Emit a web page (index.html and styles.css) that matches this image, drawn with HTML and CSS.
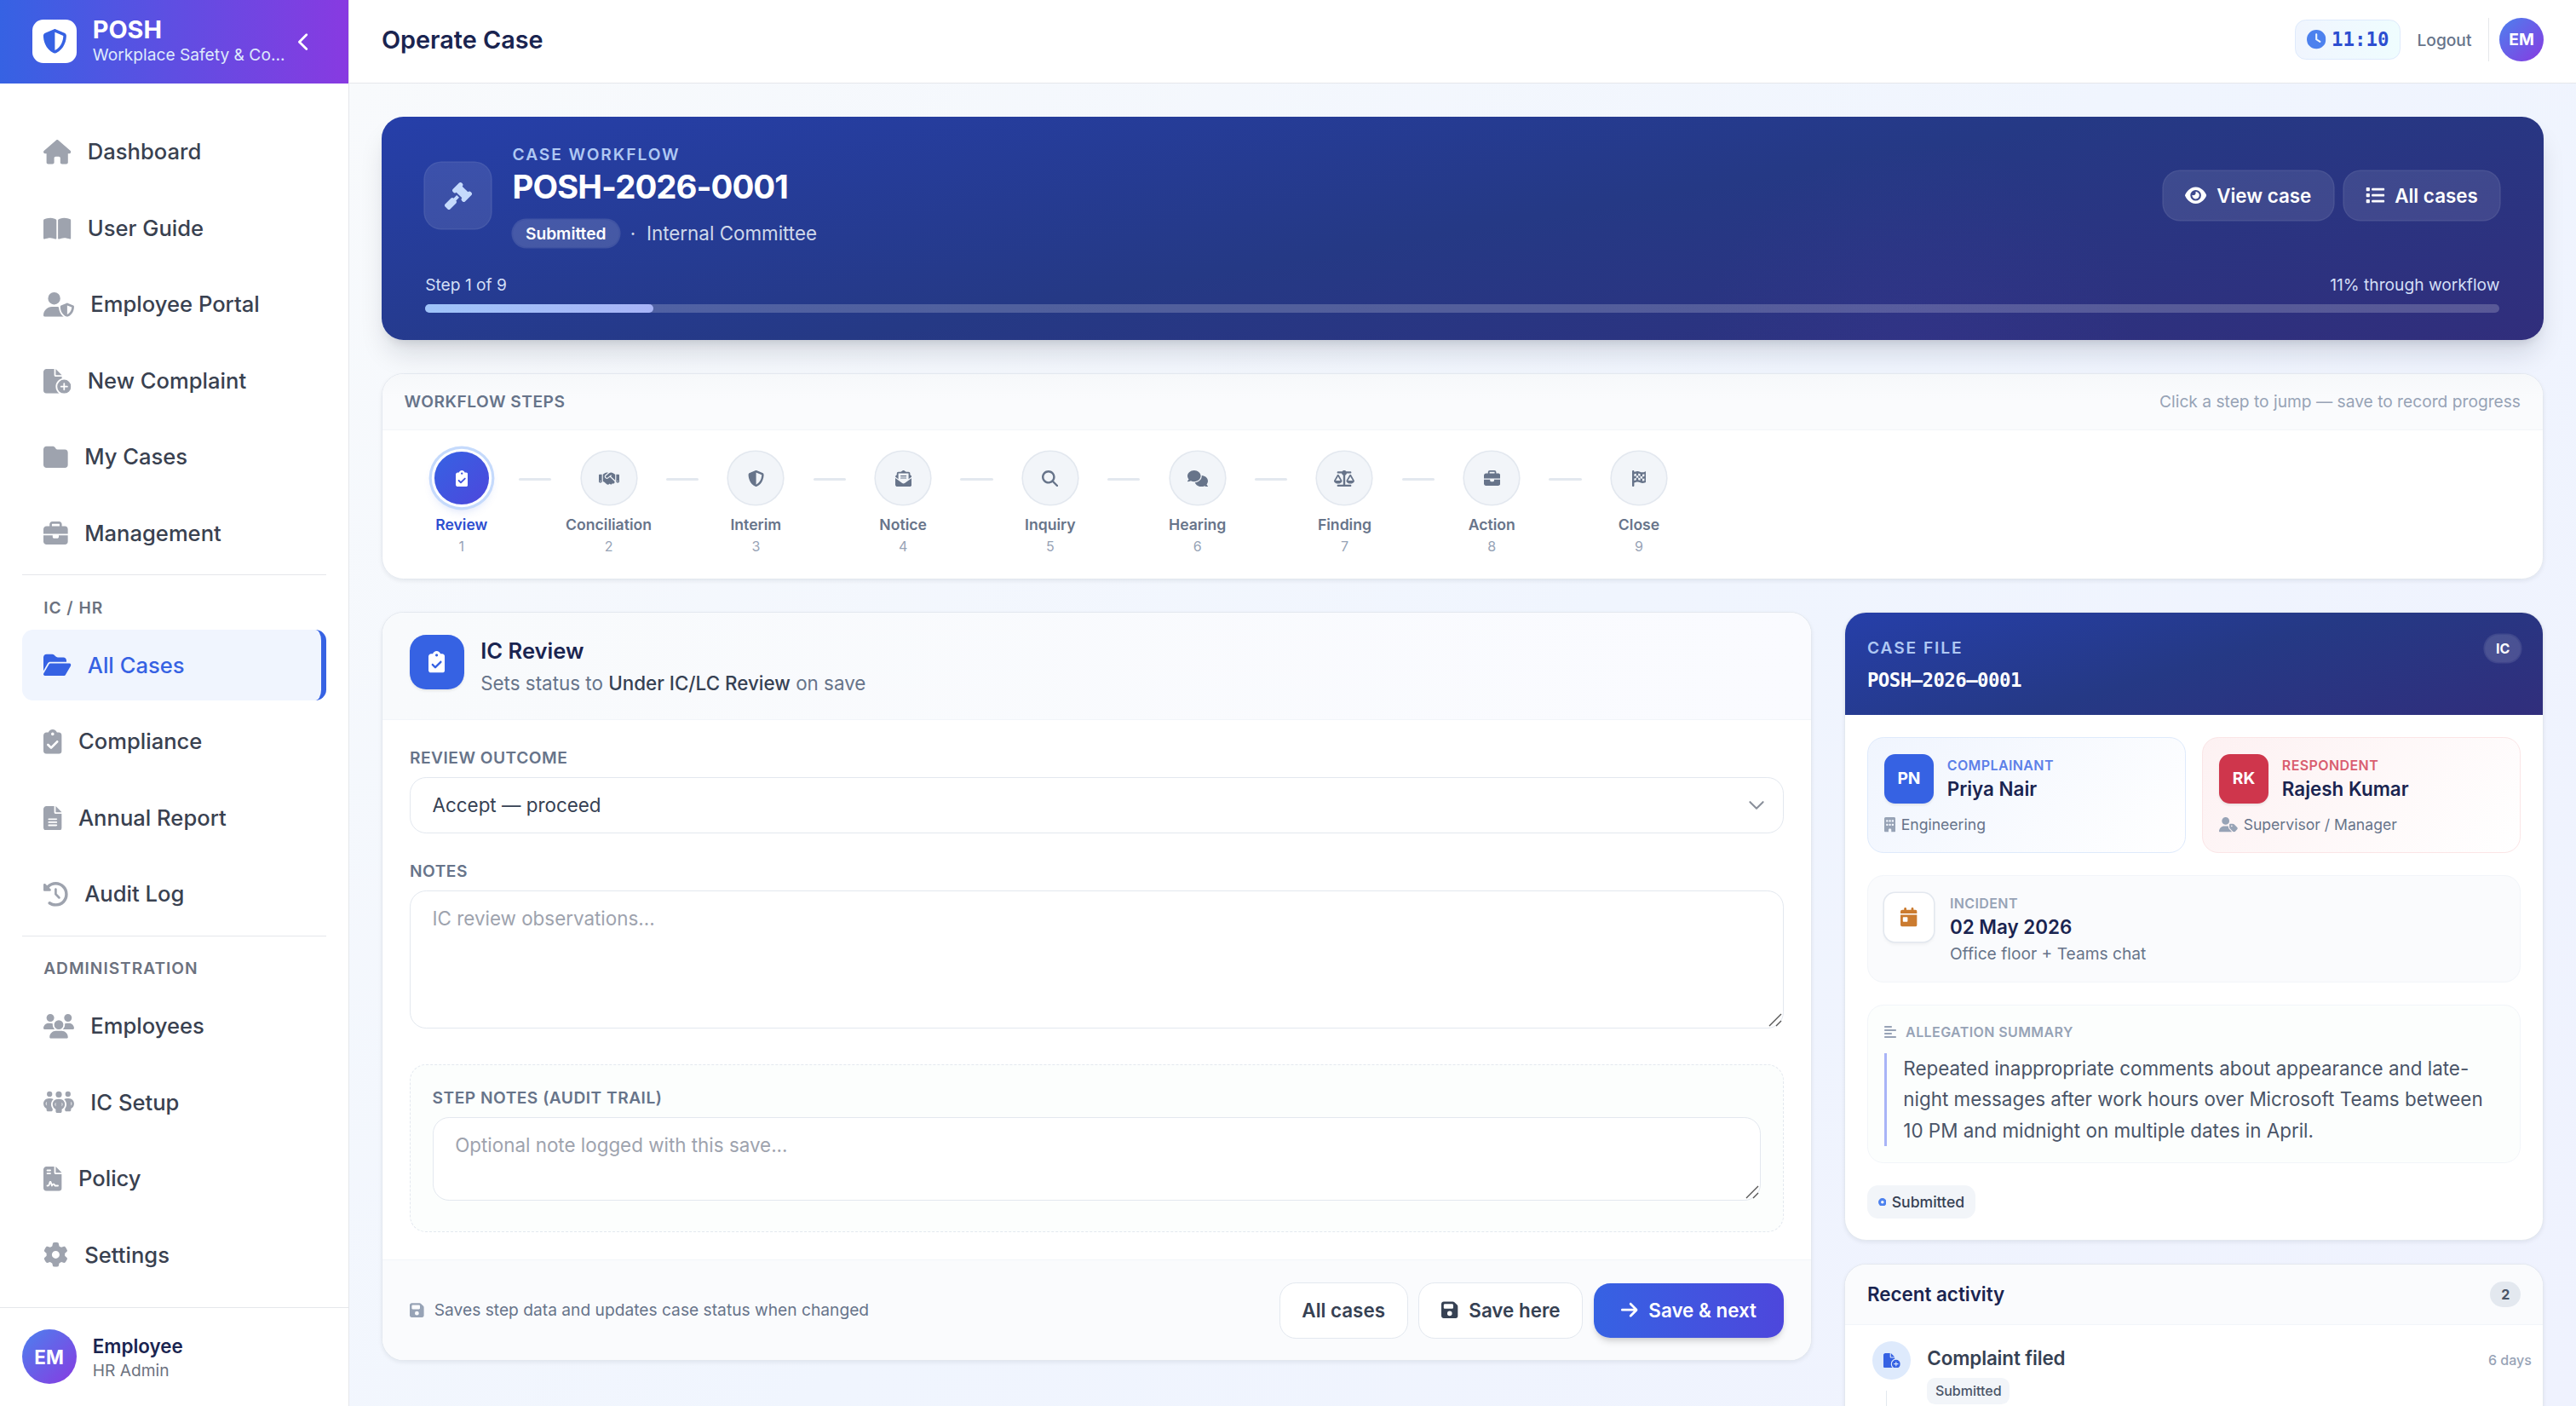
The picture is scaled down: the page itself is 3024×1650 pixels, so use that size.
FILE: index.html
```html
<!DOCTYPE html>
<html lang="en">
<head>
    <meta charset="UTF-8">
    <meta name="viewport" content="width=device-width, initial-scale=1.0">
    <title>Operate Case</title>
    <link rel="stylesheet" href="styles.css">
</head>
<body>
    <!-- icon set -->
    <svg class="sprite" aria-hidden="true">
        <symbol id="house" viewBox="0 0 576 512"><path d="M575.8 255.5c0 18-15 32.1-32 32.1h-32l.7 160.2c0 2.7-.2 5.4-.5 8.1V472c0 22.1-17.9 40-40 40H456c-1.1 0-2.2 0-3.3-.1c-1.4 .1-2.8 .1-4.2 .1H416 392c-22.1 0-40-17.9-40-40V448 384c0-17.7-14.3-32-32-32H256c-17.7 0-32 14.3-32 32v64 24c0 22.1-17.9 40-40 40H160 128.1c-1.5 0-3-.1-4.5-.2c-1.2 .1-2.4 .2-3.6 .2H104c-22.1 0-40-17.9-40-40V360c0-.9 0-1.9 .1-2.8V287.6H32c-18 0-32-14-32-32.1c0-9 3-17 10-24L266.4 8c7-7 15-8 22-8s15 2 21 7L564.8 231.5c8 7 12 15 11 24z"/></symbol>
        <symbol id="book" viewBox="0 0 576 512"><path d="M249.6 471.5c10.8 3.8 22.4-4.1 22.4-15.5V78.6c0-4.2-1.6-8.4-5-11C247.4 52 202.4 32 144 32C93.5 32 46.3 45.3 18.1 56.1C6.8 60.5 0 71.7 0 83.8V454.1c0 11.9 12.8 20.2 24.1 16.5C55.6 460.1 105.5 448 144 448c33.9 0 79 14 105.6 23.5zm76.8 0C353 462 398.1 448 432 448c38.5 0 88.4 12.1 119.9 22.6c11.3 3.8 24.1-4.6 24.1-16.5V83.8c0-12.1-6.8-23.3-18.1-27.6C529.7 45.3 482.5 32 432 32c-58.4 0-103.4 20-123 35.6c-3.3 2.6-5 6.8-5 11V456c0 11.4 11.7 19.3 22.4 15.5z"/></symbol>
        <symbol id="user-shield" viewBox="0 0 640 512"><path d="M224 256A128 128 0 1 0 224 0a128 128 0 1 0 0 256zm-45.7 48C79.8 304 0 383.8 0 482.3C0 498.7 13.3 512 29.7 512H418.3c1.8 0 3.5-.2 5.3-.5c-76.3-55.1-99.8-141-103.1-200.2c-16.1-4.8-33.1-7.3-50.7-7.3H178.3zm308.8-78.3l-120 48C358 277.4 352 286.2 352 296c0 63.3 25.9 168.8 134.8 214.2c5.9 2.5 12.6 2.5 18.5 0C614.1 464.8 640 359.3 640 296c0-9.8-6-18.6-15.1-22.3l-120-48c-5.7-2.3-12.1-2.3-17.8 0zM591.4 312c-3.9 50.7-27.2 116.7-95.4 149.7V273.8L591.4 312z"/></symbol>
        <symbol id="file-plus" viewBox="0 0 576 512"><path d="M0 64C0 28.7 28.7 0 64 0H224V128c0 17.7 14.3 32 32 32H384v38.6C310.1 219.5 256 287.4 256 368c0 59.1 29.1 111.3 73.7 143.3c-3.2 .5-6.4 .7-9.7 .7H64c-35.3 0-64-28.7-64-64V64zm384 64H256V0L384 128zm48 96a144 144 0 1 1 0 288 144 144 0 1 1 0-288zm16 80c0-8.8-7.2-16-16-16s-16 7.2-16 16v48H368c-8.8 0-16 7.2-16 16s7.2 16 16 16h48v48c0 8.8 7.2 16 16 16s16-7.2 16-16V384h48c8.8 0 16-7.2 16-16s-7.2-16-16-16H448V304z"/></symbol>
        <symbol id="folder" viewBox="0 0 512 512"><path d="M64 480H448c35.3 0 64-28.7 64-64V160c0-35.3-28.7-64-64-64H288c-10.1 0-19.6-4.7-25.6-12.8L243.2 57.6C231.1 41.5 212.1 32 192 32H64C28.7 32 0 60.7 0 96V416c0 35.3 28.7 64 64 64z"/></symbol>
        <symbol id="briefcase" viewBox="0 0 512 512"><path d="M184 48H328c4.4 0 8 3.6 8 8V96H176V56c0-4.4 3.6-8 8-8zm-56 8V96H64C28.7 96 0 124.7 0 160v96H192 320 512V160c0-35.3-28.7-64-64-64H384V56c0-30.9-25.1-56-56-56H184c-30.9 0-56 25.1-56 56zM512 288H320v32c0 17.7-14.3 32-32 32H224c-17.7 0-32-14.3-32-32V288H0V416c0 35.3 28.7 64 64 64H448c35.3 0 64-28.7 64-64V288z"/></symbol>
        <symbol id="folder-open" viewBox="0 0 576 512"><path d="M88.7 223.8L0 375.8V96C0 60.7 28.7 32 64 32H181.5c17 0 33.3 6.7 45.3 18.7l26.5 26.5c12 12 28.3 18.7 45.3 18.7H416c35.3 0 64 28.7 64 64v32H144c-22.8 0-43.8 12.1-55.3 31.8zm27.6 16.1C122.1 230 132.6 224 144 224H544c11.5 0 22 6.1 27.7 16.1s5.7 22.2-.1 32.1l-112 192C453.9 474 443.4 480 432 480H32c-11.5 0-22-6.1-27.7-16.1s-5.7-22.2 .1-32.1l112-192z"/></symbol>
        <symbol id="clipboard-check" viewBox="0 0 384 512"><path d="M192 0c-41.8 0-77.4 26.7-90.5 64H64C28.7 64 0 92.7 0 128V448c0 35.3 28.7 64 64 64H320c35.3 0 64-28.7 64-64V128c0-35.3-28.7-64-64-64H282.5C269.4 26.7 233.8 0 192 0zm0 64a32 32 0 1 1 0 64 32 32 0 1 1 0-64zM305 273L177 401c-9.4 9.4-24.6 9.4-33.9 0L79 337c-9.4-9.4-9.4-24.6 0-33.9s24.6-9.4 33.9 0l47 47L271 239c9.4-9.4 24.6-9.4 33.9 0s9.4 24.6 0 33.9z"/></symbol>
        <symbol id="file-lines" viewBox="0 0 384 512"><path d="M64 0C28.7 0 0 28.7 0 64V448c0 35.3 28.7 64 64 64H320c35.3 0 64-28.7 64-64V160H256c-17.7 0-32-14.3-32-32V0H64zM256 0V128H384L256 0zM112 256H272c8.8 0 16 7.2 16 16s-7.2 16-16 16H112c-8.8 0-16-7.2-16-16s7.2-16 16-16zm0 64H272c8.8 0 16 7.2 16 16s-7.2 16-16 16H112c-8.8 0-16-7.2-16-16s7.2-16 16-16zm0 64H272c8.8 0 16 7.2 16 16s-7.2 16-16 16H112c-8.8 0-16-7.2-16-16s7.2-16 16-16z"/></symbol>
        <symbol id="history" viewBox="0 0 512 512"><path d="M75 75L41 41C25.9 25.9 0 36.6 0 57.9V168c0 13.3 10.7 24 24 24H134.1c21.4 0 32.1-25.9 17-41l-30.8-30.8C155 85.5 203 64 256 64c106 0 192 86 192 192s-86 192-192 192c-40.8 0-78.6-12.7-109.7-34.4c-14.5-10.1-34.4-6.6-44.6 7.9s-6.6 34.4 7.9 44.6C151.2 495 201.7 512 256 512c141.4 0 256-114.6 256-256S397.4 0 256 0C185.3 0 121.3 28.7 75 75zm181 53c-13.3 0-24 10.7-24 24V256c0 6.4 2.5 12.5 7 17l72 72c9.4 9.4 24.6 9.4 33.9 0s9.4-24.6 0-33.9l-65-65V152c0-13.3-10.7-24-24-24z"/></symbol>
        <symbol id="users" viewBox="0 0 640 512"><path d="M144 0a80 80 0 1 1 0 160A80 80 0 1 1 144 0zM512 0a80 80 0 1 1 0 160A80 80 0 1 1 512 0zM0 298.7C0 239.8 47.8 192 106.7 192h42.7c15.9 0 31 3.5 44.6 9.7c-1.3 7.2-1.9 14.7-1.9 22.3c0 38.2 16.8 72.5 43.3 96c-.2 0-.4 0-.7 0H21.3C9.6 320 0 310.4 0 298.7zM405.3 320c-.2 0-.4 0-.7 0c26.6-23.5 43.3-57.8 43.3-96c0-7.6-.7-15-1.9-22.3c13.6-6.3 28.7-9.7 44.6-9.7h42.7C592.2 192 640 239.8 640 298.7c0 11.8-9.6 21.3-21.3 21.3H405.3zM224 224a96 96 0 1 1 192 0 96 96 0 1 1 -192 0zM128 485.3C128 411.7 187.7 352 261.3 352H378.7C452.3 352 512 411.7 512 485.3c0 14.7-11.9 26.7-26.7 26.7H154.7c-14.7 0-26.7-11.9-26.7-26.7z"/></symbol>
        <symbol id="people-group" viewBox="0 0 640 512"><path d="M72 88a56 56 0 1 1 112 0A56 56 0 1 1 72 88zM64 245.7C54 256.9 48 271.8 48 288s6 31.1 16 42.3V245.7zm144.4-49.3C178.7 222.7 160 261.2 160 304c0 34.3 12 65.8 32 90.5V416c0 17.7-14.3 32-32 32H96c-17.7 0-32-14.3-32-32V389.2C26.2 371.2 0 332.7 0 288c0-61.9 50.1-112 112-112h32c24 0 46.2 7.5 64.4 20.3zM448 416V394.5c20-24.7 32-56.2 32-90.5c0-42.8-18.7-81.3-48.4-107.7C449.8 183.5 472 176 496 176h32c61.9 0 112 50.1 112 112c0 44.7-26.2 83.2-64 101.2V416c0 17.7-14.3 32-32 32H480c-17.7 0-32-14.3-32-32zm8-328a56 56 0 1 1 112 0A56 56 0 1 1 456 88zM576 245.7v84.7c10-11.3 16-26.1 16-42.3s-6-31.1-16-42.3zM320 32a64 64 0 1 1 0 128 64 64 0 1 1 0-128zM240 304c0 16.2 6 31 16 42.3V261.7c-10 11.3-16 26.1-16 42.3zm144-42.3v84.7c10-11.3 16-26.1 16-42.3s-6-31.1-16-42.3zM448 304c0 44.7-26.2 83.2-64 101.2V448c0 17.7-14.3 32-32 32H288c-17.7 0-32-14.3-32-32V405.2c-37.8-18-64-56.5-64-101.2c0-61.9 50.1-112 112-112h32c61.9 0 112 50.1 112 112z"/></symbol>
        <symbol id="file-contract" viewBox="0 0 384 512"><path d="M64 0C28.7 0 0 28.7 0 64V448c0 35.3 28.7 64 64 64H320c35.3 0 64-28.7 64-64V160H256c-17.7 0-32-14.3-32-32V0H64zM256 0V128H384L256 0zM80 64h64c8.8 0 16 7.2 16 16s-7.2 16-16 16H80c-8.8 0-16-7.2-16-16s7.2-16 16-16zm0 64h64c8.8 0 16 7.2 16 16s-7.2 16-16 16H80c-8.8 0-16-7.2-16-16s7.2-16 16-16zm54.2 253.8c-6.1 20.3-24.8 34.2-46 34.2H80c-8.8 0-16-7.2-16-16s7.2-16 16-16h8.2c7.1 0 13.3-4.6 15.3-11.4l14.9-49.5c3.4-11.3 13.8-19.1 25.6-19.1s22.2 7.7 25.6 19.1l11.6 38.6c7.4-6.2 16.8-9.7 26.8-9.7c15.9 0 30.4 9 37.5 23.2l4.4 8.8H304c8.8 0 16 7.2 16 16s-7.2 16-16 16H240c-6.1 0-11.6-3.4-14.3-8.8l-8.8-17.7c-1.7-3.4-5.1-5.5-8.8-5.5s-7.2 2.1-8.8 5.5l-8.8 17.7c-2.9 5.9-9.2 9.4-15.7 8.8s-12.1-5.1-13.9-11.3L144 349l-9.8 32.8z"/></symbol>
        <symbol id="gear" viewBox="0 0 512 512"><path d="M495.9 166.6c3.2 8.7 .5 18.4-6.4 24.6l-43.3 39.4c1.1 8.3 1.7 16.8 1.7 25.4s-.6 17.1-1.7 25.4l43.3 39.4c6.9 6.2 9.6 15.9 6.4 24.6c-4.4 11.9-9.7 23.3-15.8 34.3l-4.7 8.1c-6.6 11-14 21.4-22.1 31.2c-5.9 7.2-15.7 9.6-24.5 6.8l-55.7-17.7c-13.4 10.3-28.2 18.9-44 25.4l-12.5 57.1c-2 9.1-9 16.3-18.2 17.8c-13.8 2.3-28 3.5-42.5 3.5s-28.7-1.2-42.5-3.5c-9.2-1.5-16.2-8.7-18.2-17.8l-12.5-57.1c-15.8-6.5-30.6-15.1-44-25.4L83.1 425.9c-8.8 2.8-18.6 .3-24.5-6.8c-8.1-9.8-15.5-20.2-22.1-31.2l-4.7-8.1c-6.1-11-11.4-22.4-15.8-34.3c-3.2-8.7-.5-18.4 6.4-24.6l43.3-39.4C64.6 273.1 64 264.6 64 256s.6-17.1 1.7-25.4L22.4 191.2c-6.9-6.2-9.6-15.9-6.4-24.6c4.4-11.9 9.7-23.3 15.8-34.3l4.7-8.1c6.6-11 14-21.4 22.1-31.2c5.9-7.2 15.7-9.6 24.5-6.8l55.7 17.7c13.4-10.3 28.2-18.9 44-25.4l12.5-57.1c2-9.1 9-16.3 18.2-17.8C227.3 1.2 241.5 0 256 0s28.7 1.2 42.5 3.5c9.2 1.5 16.2 8.7 18.2 17.8l12.5 57.1c15.8 6.5 30.6 15.1 44 25.4l55.7-17.7c8.8-2.8 18.6-.3 24.5 6.8c8.1 9.8 15.5 20.2 22.1 31.2l4.7 8.1c6.1 11 11.4 22.4 15.8 34.3zM256 336a80 80 0 1 0 0-160 80 80 0 1 0 0 160z"/></symbol>
        <symbol id="shield" viewBox="0 0 512 512"><path d="M256 0c4.6 0 9.2 1 13.4 2.9L457.7 82.8c22 9.3 38.4 31 38.3 57.2c-.5 99.2-41.3 280.7-213.6 363.2c-16.7 8-36.1 8-52.8 0C57.3 420.7 16.5 239.2 16 140c-.1-26.2 16.3-47.9 38.3-57.2L242.7 2.9C246.8 1 251.4 0 256 0zm0 66.8V444.8C394 378 431.1 230.1 432 141.4L256 66.8l0 0z"/></symbol>
        <symbol id="gavel" viewBox="0 0 512 512"><path d="M318.6 9.4c-12.5-12.5-32.8-12.5-45.3 0l-120 120c-12.5 12.5-12.5 32.8 0 45.3l16 16c12.5 12.5 32.8 12.5 45.3 0l4-4L325.4 293.4l-4 4c-12.5 12.5-12.5 32.8 0 45.3l16 16c12.5 12.5 32.8 12.5 45.3 0l120-120c12.5-12.5 12.5-32.8 0-45.3l-16-16c-12.5-12.5-32.8-12.5-45.3 0l-4 4L330.6 74.6l4-4c12.5-12.5 12.5-32.8 0-45.3l-16-16zm-152 288c-12.5-12.5-32.8-12.5-45.3 0l-112 112c-12.5 12.5-12.5 32.8 0 45.3l48 48c12.5 12.5 32.8 12.5 45.3 0l112-112c12.5-12.5 12.5-32.8 0-45.3l-1.4-1.4L272 285.3 226.7 240 168 298.7l-1.4-1.4z"/></symbol>
        <symbol id="eye" viewBox="0 0 576 512"><path d="M288 32c-80.8 0-145.5 36.8-192.6 80.6C48.6 156 17.3 208 2.5 243.7c-3.3 7.9-3.3 16.7 0 24.6C17.3 304 48.6 356 95.4 399.4C142.5 443.2 207.2 480 288 480s145.5-36.8 192.6-80.6c46.8-43.5 78.1-95.4 93-131.1c3.3-7.9 3.3-16.7 0-24.6c-14.9-35.7-46.2-87.7-93-131.1C433.5 68.8 368.8 32 288 32zM144 256a144 144 0 1 1 288 0 144 144 0 1 1 -288 0zm144-64c0 35.3-28.7 64-64 64c-7.1 0-13.9-1.2-20.3-3.3c-5.5-1.8-11.9 1.6-11.7 7.4c.3 6.9 1.3 13.8 3.2 20.7c13.7 51.2 66.4 81.6 117.6 67.9s81.6-66.4 67.9-117.6c-11.1-41.5-47.8-69.4-88.6-71.1c-5.8-.2-9.2 6.1-7.4 11.7c2.1 6.4 3.3 13.2 3.3 20.3z"/></symbol>
        <symbol id="list" viewBox="0 0 512 512"><path d="M40 48C26.7 48 16 58.7 16 72v48c0 13.3 10.7 24 24 24H88c13.3 0 24-10.7 24-24V72c0-13.3-10.7-24-24-24H40zM192 64c-17.7 0-32 14.3-32 32s14.3 32 32 32H480c17.7 0 32-14.3 32-32s-14.3-32-32-32H192zm0 160c-17.7 0-32 14.3-32 32s14.3 32 32 32H480c17.7 0 32-14.3 32-32s-14.3-32-32-32H192zm0 160c-17.7 0-32 14.3-32 32s14.3 32 32 32H480c17.7 0 32-14.3 32-32s-14.3-32-32-32H192zM16 232v48c0 13.3 10.7 24 24 24H88c13.3 0 24-10.7 24-24V232c0-13.3-10.7-24-24-24H40c-13.3 0-24 10.7-24 24zM40 368c-13.3 0-24 10.7-24 24v48c0 13.3 10.7 24 24 24H88c13.3 0 24-10.7 24-24V392c0-13.3-10.7-24-24-24H40z"/></symbol>
        <symbol id="clock" viewBox="0 0 512 512"><path d="M256 0a256 256 0 1 1 0 512A256 256 0 1 1 256 0zM232 120V256c0 8 4 15.5 10.7 20l96 64c11 7.4 25.9 4.4 33.3-6.7s4.4-25.9-6.7-33.3L280 243.2V120c0-13.3-10.7-24-24-24s-24 10.7-24 24z"/></symbol>
        <symbol id="handshake" viewBox="0 0 640 512"><path d="M323.4 85.2l-96.8 78.4c-16.1 13-19.2 36.4-7 53.1c12.9 17.8 38 21.3 55.3 7.8l99.3-77.2c7-5.4 17-4.2 22.5 2.8s4.2 17-2.8 22.5l-20.9 16.2L512 316.8V128h-.7l-3.9-2.5L434.8 79c-15.3-9.8-33.2-15-51.4-15c-21.8 0-43 7.5-60 21.2zm22.8 124.4l-51.7 40.2C263 274.3 217.3 268 193.7 235.6c-22.2-30.5-16.6-73.1 12.7-96.8l83.2-67.3c-11.6-4.9-24.1-7.4-36.8-7.4C234 64 215.7 69.6 200 80l-72 48V352h28.2l91.4 83.4c19.6 17.9 49.9 16.5 67.8-3.1c5.5-6.1 9.2-13.2 11.1-20.6l17 15.6c19.5 17.9 49.9 16.6 67.8-2.9c4.5-4.9 7.8-10.6 9.9-16.5c19.4 13 45.8 10.3 62.1-7.5c17.9-19.5 16.6-49.9-2.9-67.8l-134.2-123zM16 128c-8.8 0-16 7.2-16 16V352c0 17.7 14.3 32 32 32H64c17.7 0 32-14.3 32-32V128H16zM48 320a16 16 0 1 1 0 32 16 16 0 1 1 0-32zM544 128V352c0 17.7 14.3 32 32 32h32c17.7 0 32-14.3 32-32V144c0-8.8-7.2-16-16-16H544zm32 208a16 16 0 1 1 32 0 16 16 0 1 1 -32 0z"/></symbol>
        <symbol id="envelope" viewBox="0 0 512 512"><path d="M215.4 96H144 107.8 96v8.8V144v40.4 89L.2 202.5c1.6-18.1 10.9-34.9 25.7-45.8L48 140.3V96c0-26.5 21.5-48 48-48h76.6l49.9-36.9C232.2 3.9 243.9 0 256 0s23.8 3.9 33.5 11L339.4 48H416c26.5 0 48 21.5 48 48v44.3l22.1 16.4c14.8 10.9 24.1 27.7 25.7 45.8L416 273.4v-89V144 104.8 96H404.2 368 296.6 215.4zM0 448V242.1L217.6 403.3c11.1 8.2 24.6 12.7 38.4 12.7s27.3-4.4 38.4-12.7L512 242.1V448v0c0 35.3-28.7 64-64 64H64c-35.3 0-64-28.7-64-64v0zM176 160H336c8.8 0 16 7.2 16 16s-7.2 16-16 16H176c-8.8 0-16-7.2-16-16s7.2-16 16-16zm0 64H336c8.8 0 16 7.2 16 16s-7.2 16-16 16H176c-8.8 0-16-7.2-16-16s7.2-16 16-16z"/></symbol>
        <symbol id="search" viewBox="0 0 512 512"><path d="M416 208c0 45.9-14.9 88.3-40 122.7L502.6 457.4c12.5 12.5 12.5 32.8 0 45.3s-32.8 12.5-45.3 0L330.7 376c-34.4 25.2-76.8 40-122.7 40C93.1 416 0 322.9 0 208S93.1 0 208 0S416 93.1 416 208zM208 352a144 144 0 1 0 0-288 144 144 0 1 0 0 288z"/></symbol>
        <symbol id="comments" viewBox="0 0 640 512"><path d="M208 352c114.9 0 208-78.8 208-176S322.9 0 208 0S0 78.8 0 176c0 38.6 14.7 74.3 39.6 103.4c-3.5 9.4-8.7 17.7-14.2 24.7c-4.8 6.2-9.7 11-13.3 14.3c-1.8 1.6-3.3 2.9-4.3 3.7c-.5 .4-.9 .7-1.1 .8l-.2 .2C1 327.2-1.4 334.4 .8 340.9S9.1 352 16 352c21.8 0 43.8-5.6 62.1-12.5c9.2-3.5 17.8-7.4 25.3-11.4C134.1 343.3 169.8 352 208 352zM448 176c0 112.3-99.1 196.9-216.5 207C255.8 457.4 336.4 512 432 512c38.2 0 73.9-8.7 104.7-23.9c7.5 4 16 7.9 25.2 11.4c18.3 6.9 40.3 12.5 62.1 12.5c6.9 0 13.1-4.5 15.2-11.1c2.1-6.6-.2-13.8-5.8-17.9l-.2-.2c-.2-.2-.6-.4-1.1-.8c-1-.8-2.5-2-4.3-3.7c-3.6-3.3-8.5-8.1-13.3-14.3c-5.5-7-10.7-15.4-14.2-24.7c24.9-29 39.6-64.7 39.6-103.4c0-92.8-84.9-168.9-192.6-175.5c.4 5.1 .6 10.3 .6 15.5z"/></symbol>
        <symbol id="scale" viewBox="0 0 640 512"><path d="M384 32H512c17.7 0 32 14.3 32 32s-14.3 32-32 32H398.4c-5.2 25.8-22.9 47.1-46.4 57.3V448H512c17.7 0 32 14.3 32 32s-14.3 32-32 32H320 128c-17.7 0-32-14.3-32-32s14.3-32 32-32H288V153.3c-23.5-10.3-41.2-31.6-46.4-57.3H128c-17.7 0-32-14.3-32-32s14.3-32 32-32H256c14.6-19.4 37.8-32 64-32s49.4 12.6 64 32zm55.6 288H584.4L512 195.8 439.6 320zM512 416c-62.9 0-115.2-34-126-78.9c-2.6-11 1-22.3 6.7-32.1l95.2-163.2c5-8.6 14.2-13.8 24.1-13.8s19.1 5.3 24.1 13.8l95.2 163.2c5.7 9.8 9.3 21.1 6.7 32.1C627.2 382 574.9 416 512 416zM126.8 195.8L54.4 320H199.3L126.8 195.8zM.9 337.1c-2.6-11 1-22.3 6.7-32.1l95.2-163.2c5-8.6 14.2-13.8 24.1-13.8s19.1 5.3 24.1 13.8l95.2 163.2c5.7 9.8 9.3 21.1 6.7 32.1C242 382 189.7 416 126.8 416S11.7 382 .9 337.1z"/></symbol>
        <symbol id="flag" viewBox="0 0 448 512"><path d="M32 0C49.7 0 64 14.3 64 32V48l69-17.2c38.1-9.5 78.3-5.1 113.5 12.5c46.3 23.2 100.8 23.2 147.1 0l9.6-4.8C423.8 28.1 448 43.1 448 66.1V345.8c0 13.3-8.3 25.3-20.8 30l-34.7 13c-46.2 17.3-97.6 14.6-141.7-7.4c-37.9-19-81.3-23.7-122.5-13.4L64 384v96c0 17.7-14.3 32-32 32s-32-14.3-32-32V400 334 64 32C0 14.3 14.3 0 32 0zM64 187.1l64-13.9v65.5L64 252.6V318l48.8-12.2c5.1-1.3 10.1-2.4 15.2-3.3V238.7l38.9-8.4c8.3-1.8 16.7-2.5 25.1-2.1l0-64c13.6 .4 27.2 2.6 40.4 6.4l23.6 6.9v66.7l-41.7-12.3c-7.3-2.1-14.8-3.4-22.3-3.8v71.4c21.8 1.9 43.3 6.7 64 14.4V244.2l22.7 6.7c13.5 4 27.3 6.4 41.3 7.4V194c-7.8-.8-15.6-2.3-23.2-4.5l-40.8-12v-62c-13-3.8-25.8-8.8-38.2-15c-8.2-4.1-16.9-7-25.8-8.8v72.4c-13-.4-26 .8-38.7 3.6L128 173.2V98L64 114v73.1zM320 335.7c16.8 1.5 33.9-.7 50-6.8l14-5.2V251.9l-7.9 1.8c-18.4 4.3-37.3 5.7-56.1 4.5v77.4zm64-149.4V115.4c-20.9 6.1-42.4 9.1-64 9.1V194c13.9 1.4 28 .5 41.7-2.6l22.3-5.2z"/></symbol>
        <symbol id="floppy" viewBox="0 0 448 512"><path d="M64 32C28.7 32 0 60.7 0 96V416c0 35.3 28.7 64 64 64H384c35.3 0 64-28.7 64-64V173.3c0-17-6.7-33.3-18.7-45.3L352 50.7C340 38.7 323.7 32 306.7 32H64zm0 96c0-17.7 14.3-32 32-32H288c17.7 0 32 14.3 32 32v64c0 17.7-14.3 32-32 32H96c-17.7 0-32-14.3-32-32V128zM224 288a64 64 0 1 1 0 128 64 64 0 1 1 0-128z"/></symbol>
        <symbol id="arrow-right" viewBox="0 0 448 512"><path d="M438.6 278.6c12.5-12.5 12.5-32.8 0-45.3l-160-160c-12.5-12.5-32.8-12.5-45.3 0s-12.5 32.8 0 45.3L338.8 224 32 224c-17.7 0-32 14.3-32 32s14.3 32 32 32l306.7 0L233.4 393.4c-12.5 12.5-12.5 32.8 0 45.3s32.8 12.5 45.3 0l160-160z"/></symbol>
        <symbol id="chevron-left" viewBox="0 0 320 512"><path d="M9.4 233.4c-12.5 12.5-12.5 32.8 0 45.3l192 192c12.5 12.5 32.8 12.5 45.3 0s12.5-32.8 0-45.3L77.3 256 246.6 86.6c12.5-12.5 12.5-32.8 0-45.3s-32.8-12.5-45.3 0l-192 192z"/></symbol>
        <symbol id="building" viewBox="0 0 384 512"><path d="M48 0C21.5 0 0 21.5 0 48V464c0 26.5 21.5 48 48 48h96V432c0-26.5 21.5-48 48-48s48 21.5 48 48v80h96c26.5 0 48-21.5 48-48V48c0-26.5-21.5-48-48-48H48zM64 240c0-8.8 7.2-16 16-16h32c8.8 0 16 7.2 16 16v32c0 8.8-7.2 16-16 16H80c-8.8 0-16-7.2-16-16V240zm112-16h32c8.8 0 16 7.2 16 16v32c0 8.8-7.2 16-16 16H176c-8.8 0-16-7.2-16-16V240c0-8.8 7.2-16 16-16zm80 16c0-8.8 7.2-16 16-16h32c8.8 0 16 7.2 16 16v32c0 8.8-7.2 16-16 16H272c-8.8 0-16-7.2-16-16V240zM80 96h32c8.8 0 16 7.2 16 16v32c0 8.8-7.2 16-16 16H80c-8.8 0-16-7.2-16-16V112c0-8.8 7.2-16 16-16zm80 16c0-8.8 7.2-16 16-16h32c8.8 0 16 7.2 16 16v32c0 8.8-7.2 16-16 16H176c-8.8 0-16-7.2-16-16V112zM272 96h32c8.8 0 16 7.2 16 16v32c0 8.8-7.2 16-16 16H272c-8.8 0-16-7.2-16-16V112c0-8.8 7.2-16 16-16z"/></symbol>
        <symbol id="user-tag" viewBox="0 0 640 512"><path d="M224 256A128 128 0 1 0 224 0a128 128 0 1 0 0 256zm-45.7 48C79.8 304 0 383.8 0 482.3C0 498.7 13.3 512 29.7 512H418.3c10 0 18.8-4.9 24.2-12.5l-99.2-99.2c-14.9-14.9-23.3-35.1-23.3-56.1v-33c-15.9-4.7-32.8-7.2-50.3-7.2H178.3zM384 224c-17.7 0-32 14.3-32 32v82.7c0 17 6.7 33.3 18.7 45.3L478.1 491.3c18.7 18.7 49.1 18.7 67.9 0l73.4-73.4c18.7-18.7 18.7-49.1 0-67.9L512 242.7c-12-12-28.3-18.7-45.3-18.7H384zm24 80a24 24 0 1 1 48 0 24 24 0 1 1 -48 0z"/></symbol>
        <symbol id="calendar" viewBox="0 0 448 512"><path d="M128 0c17.7 0 32 14.3 32 32V64H288V32c0-17.7 14.3-32 32-32s32 14.3 32 32V64h48c26.5 0 48 21.5 48 48v48H0V112C0 85.5 21.5 64 48 64H96V32c0-17.7 14.3-32 32-32zM0 192H448V464c0 26.5-21.5 48-48 48H48c-26.5 0-48-21.5-48-48V192zm80 64c-8.8 0-16 7.2-16 16v96c0 8.8 7.2 16 16 16h96c8.8 0 16-7.2 16-16V272c0-8.8-7.2-16-16-16H80z"/></symbol>
        <symbol id="align-left" viewBox="0 0 448 512"><path d="M288 64c0 17.7-14.3 32-32 32H32C14.3 96 0 81.7 0 64S14.3 32 32 32H256c17.7 0 32 14.3 32 32zm0 256c0 17.7-14.3 32-32 32H32c-17.7 0-32-14.3-32-32s14.3-32 32-32H256c17.7 0 32 14.3 32 32zM0 192c0-17.7 14.3-32 32-32H416c17.7 0 32 14.3 32 32s-14.3 32-32 32H32c-17.7 0-32-14.3-32-32zM448 448c0 17.7-14.3 32-32 32H32c-17.7 0-32-14.3-32-32s14.3-32 32-32H416c17.7 0 32 14.3 32 32z"/></symbol>
        <symbol id="circle-dot" viewBox="0 0 512 512"><path d="M256 512A256 256 0 1 0 256 0a256 256 0 1 0 0 512zm0-352a96 96 0 1 1 0 192 96 96 0 1 1 0-192z"/></symbol>
    </svg>

    <div class="app">
        <aside class="sidebar">
            <div class="brand">
                <div class="brand-logo"><svg class="icon" viewBox="0 0 512 512"><use href="#shield"/></svg></div>
                <div class="brand-text">
                    <div class="brand-name">POSH</div>
                    <div class="brand-sub">Workplace Safety &amp; Co...</div>
                </div>
                <svg class="icon brand-toggle" viewBox="0 0 320 512"><use href="#chevron-left"/></svg>
            </div>

            <nav class="nav">
                <a class="nav-item"><svg class="icon" viewBox="0 0 576 512"><use href="#house"/></svg>Dashboard</a>
                <a class="nav-item"><svg class="icon" viewBox="0 0 576 512"><use href="#book"/></svg>User Guide</a>
                <a class="nav-item"><svg class="icon" viewBox="0 0 640 512"><use href="#user-shield"/></svg>Employee Portal</a>
                <a class="nav-item"><svg class="icon" viewBox="0 0 576 512"><use href="#file-plus"/></svg>New Complaint</a>
                <a class="nav-item"><svg class="icon" viewBox="0 0 512 512"><use href="#folder"/></svg>My Cases</a>
                <a class="nav-item"><svg class="icon" viewBox="0 0 512 512"><use href="#briefcase"/></svg>Management</a>

                <div class="nav-heading">IC / HR</div>
                <a class="nav-item active"><svg class="icon" viewBox="0 0 576 512"><use href="#folder-open"/></svg>All Cases</a>
                <a class="nav-item"><svg class="icon" viewBox="0 0 384 512"><use href="#clipboard-check"/></svg>Compliance</a>
                <a class="nav-item"><svg class="icon" viewBox="0 0 384 512"><use href="#file-lines"/></svg>Annual Report</a>
                <a class="nav-item"><svg class="icon" viewBox="0 0 512 512"><use href="#history"/></svg>Audit Log</a>

                <div class="nav-heading">ADMINISTRATION</div>
                <a class="nav-item"><svg class="icon" viewBox="0 0 640 512"><use href="#users"/></svg>Employees</a>
                <a class="nav-item"><svg class="icon" viewBox="0 0 640 512"><use href="#people-group"/></svg>IC Setup</a>
                <a class="nav-item"><svg class="icon" viewBox="0 0 384 512"><use href="#file-contract"/></svg>Policy</a>
                <a class="nav-item"><svg class="icon" viewBox="0 0 512 512"><use href="#gear"/></svg>Settings</a>
            </nav>

            <div class="sidebar-user">
                <div class="avatar avatar-lg">EM</div>
                <div>
                    <div class="user-name">Employee</div>
                    <div class="user-role">HR Admin</div>
                </div>
            </div>
        </aside>

        <div class="main">
            <header class="topbar">
                <h1>Operate Case</h1>
                <div class="topbar-right">
                    <div class="clock"><svg class="icon" viewBox="0 0 512 512"><use href="#clock"/></svg>11:10</div>
                    <a class="logout">Logout</a>
                    <div class="topbar-user"><div class="avatar">EM</div></div>
                </div>
            </header>

            <main class="content">
                <!-- case banner -->
                <section class="hero">
                    <div class="hero-top">
                        <div class="hero-icon"><svg class="icon" viewBox="0 0 512 512"><use href="#gavel"/></svg></div>
                        <div class="hero-info">
                            <div class="eyebrow">CASE WORKFLOW</div>
                            <h2>POSH-2026-0001</h2>
                            <div class="hero-meta">
                                <span class="hero-badge">Submitted</span>
                                <span class="hero-dot">·</span>
                                <span>Internal Committee</span>
                            </div>
                        </div>
                        <div class="hero-actions">
                            <a class="glass-btn"><svg class="icon" viewBox="0 0 576 512"><use href="#eye"/></svg>View case</a>
                            <a class="glass-btn"><svg class="icon" viewBox="0 0 512 512"><use href="#list"/></svg>All cases</a>
                        </div>
                    </div>
                    <div class="hero-progress-text"><span>Step 1 of 9</span><span>11% through workflow</span></div>
                    <div class="track"><div class="track-fill" style="width: 11%"></div></div>
                </section>

                <!-- workflow steps -->
                <section class="card steps-card">
                    <div class="steps-head"><h3>WORKFLOW STEPS</h3><span>Click a step to jump — save to record progress</span></div>
                    <div class="steps">
                        <div class="step current"><div class="step-circle"><svg class="icon" viewBox="0 0 384 512"><use href="#clipboard-check"/></svg></div><b>Review</b><small>1</small></div>
                        <div class="step-line"></div>
                        <div class="step"><div class="step-circle"><svg class="icon" viewBox="0 0 640 512"><use href="#handshake"/></svg></div><b>Conciliation</b><small>2</small></div>
                        <div class="step-line"></div>
                        <div class="step"><div class="step-circle"><svg class="icon" viewBox="0 0 512 512"><use href="#shield"/></svg></div><b>Interim</b><small>3</small></div>
                        <div class="step-line"></div>
                        <div class="step"><div class="step-circle"><svg class="icon" viewBox="0 0 512 512"><use href="#envelope"/></svg></div><b>Notice</b><small>4</small></div>
                        <div class="step-line"></div>
                        <div class="step"><div class="step-circle"><svg class="icon" viewBox="0 0 512 512"><use href="#search"/></svg></div><b>Inquiry</b><small>5</small></div>
                        <div class="step-line"></div>
                        <div class="step"><div class="step-circle"><svg class="icon" viewBox="0 0 640 512"><use href="#comments"/></svg></div><b>Hearing</b><small>6</small></div>
                        <div class="step-line"></div>
                        <div class="step"><div class="step-circle"><svg class="icon" viewBox="0 0 640 512"><use href="#scale"/></svg></div><b>Finding</b><small>7</small></div>
                        <div class="step-line"></div>
                        <div class="step"><div class="step-circle"><svg class="icon" viewBox="0 0 512 512"><use href="#briefcase"/></svg></div><b>Action</b><small>8</small></div>
                        <div class="step-line"></div>
                        <div class="step"><div class="step-circle"><svg class="icon" viewBox="0 0 448 512"><use href="#flag"/></svg></div><b>Close</b><small>9</small></div>
                    </div>
                </section>

                <div class="columns">
                    <!-- review form -->
                    <section class="card review">
                        <div class="review-head">
                            <div class="review-icon"><svg class="icon" viewBox="0 0 384 512"><use href="#clipboard-check"/></svg></div>
                            <div>
                                <h3>IC Review</h3>
                                <p>Sets status to <strong>Under IC/LC Review</strong> on save</p>
                            </div>
                        </div>
                        <div class="review-body">
                            <label class="label" for="outcome">REVIEW OUTCOME</label>
                            <div class="field">
                                <select class="input" id="outcome"><option>Accept — proceed</option></select>
                                <svg class="select-arrow" viewBox="0 0 20 20"><path d="M6 8l4 4 4-4"/></svg>
                            </div>
                            <label class="label" for="notes">NOTES</label>
                            <div class="field">
                                <textarea class="input notes" id="notes" placeholder="IC review observations..."></textarea>
                                <svg class="grip" viewBox="0 0 16 16"><path d="M1 15L15 1M9 15L15 9"/></svg>
                            </div>
                            <div class="step-notes">
                                <label class="label" for="step-notes">STEP NOTES (AUDIT TRAIL)</label>
                                <div class="field">
                                    <textarea class="input" id="step-notes" placeholder="Optional note logged with this save..."></textarea>
                                    <svg class="grip" viewBox="0 0 16 16"><path d="M1 15L15 1M9 15L15 9"/></svg>
                                </div>
                            </div>
                        </div>
                        <div class="review-foot">
                            <div class="foot-note"><svg class="icon" viewBox="0 0 448 512"><use href="#floppy"/></svg>Saves step data and updates case status when changed</div>
                            <div class="foot-actions">
                                <button class="btn" type="button">All cases</button>
                                <button class="btn" type="button"><svg class="icon" viewBox="0 0 448 512"><use href="#floppy"/></svg>Save here</button>
                                <button class="btn btn-primary" type="button"><svg class="icon" viewBox="0 0 448 512"><use href="#arrow-right"/></svg>Save &amp; next</button>
                            </div>
                        </div>
                    </section>

                    <div class="side">
                        <!-- case file -->
                        <section class="card">
                            <div class="file-head">
                                <div class="file-head-row"><span class="eyebrow">CASE FILE</span><span class="ic-badge">IC</span></div>
                                <div class="file-id">POSH–2026–0001</div>
                            </div>
                            <div class="file-body">
                                <div class="parties">
                                    <div class="party complainant">
                                        <div class="party-top">
                                            <div class="party-avatar">PN</div>
                                            <div><div class="mini-label">COMPLAINANT</div><div class="strong-line">Priya Nair</div></div>
                                        </div>
                                        <div class="party-meta"><svg class="icon" viewBox="0 0 384 512"><use href="#building"/></svg>Engineering</div>
                                    </div>
                                    <div class="party respondent">
                                        <div class="party-top">
                                            <div class="party-avatar">RK</div>
                                            <div><div class="mini-label">RESPONDENT</div><div class="strong-line">Rajesh Kumar</div></div>
                                        </div>
                                        <div class="party-meta"><svg class="icon" viewBox="0 0 640 512"><use href="#user-tag"/></svg>Supervisor / Manager</div>
                                    </div>
                                </div>
                                <div class="incident">
                                    <div class="incident-icon"><svg class="icon" viewBox="0 0 448 512"><use href="#calendar"/></svg></div>
                                    <div>
                                        <div class="mini-label">INCIDENT</div>
                                        <div class="strong-line">02 May 2026</div>
                                        <div class="incident-place">Office floor + Teams chat</div>
                                    </div>
                                </div>
                                <div class="allegation">
                                    <div class="mini-label"><svg class="icon" viewBox="0 0 448 512"><use href="#align-left"/></svg>ALLEGATION SUMMARY</div>
                                    <blockquote>Repeated inappropriate comments about appearance and late-night messages after work hours over Microsoft Teams between 10 PM and midnight on multiple dates in April.</blockquote>
                                </div>
                                <div class="status-chip"><svg class="icon" viewBox="0 0 512 512"><use href="#circle-dot"/></svg>Submitted</div>
                            </div>
                        </section>

                        <!-- activity -->
                        <section class="card">
                            <div class="activity-head"><h3>Recent activity</h3><span class="count">2</span></div>
                            <div class="activity-item">
                                <div class="activity-rail">
                                    <div class="activity-icon"><svg class="icon" viewBox="0 0 576 512"><use href="#file-plus"/></svg></div>
                                    <div class="rail-line"></div>
                                </div>
                                <div class="activity-text">
                                    <div class="activity-title">Complaint filed</div>
                                    <span class="activity-chip">Submitted</span>
                                </div>
                                <div class="activity-time">6 days</div>
                            </div>
                        </section>
                    </div>
                </div>
            </main>
        </div>
    </div>
</body>
</html>
```
FILE: styles.css
```css
* {
    box-sizing: border-box;
    margin: 0;
    padding: 0;
}
html {
    font-size: 25.6px;
}
body {
    font-family: Inter, "Liberation Sans", sans-serif;
    line-height: 1.5;
    color: #394150;
    height: 100vh;
    overflow: hidden;
}
.sprite {
    position: absolute;
    width: 0;
    height: 0;
}
.icon {
    height: 1em;
    width: auto;
    flex: none;
    fill: currentColor;
}
.app {
    display: flex;
    height: 100vh;
}

/* sidebar */
.sidebar {
    width: 16rem;
    flex: none;
    display: flex;
    flex-direction: column;
    background: #fff;
    border-right: 1px solid #e5e7eb;
}
.brand {
    height: 97.6px;
    flex: none;
    display: flex;
    align-items: center;
    padding: 0 1.5rem;
    padding-right: 1.75rem;
    background: linear-gradient(to right, #3662e3, #883ae1);
    color: #fff;
}
.brand-logo {
    width: 2rem;
    height: 2rem;
    flex: none;
    display: flex;
    align-items: center;
    justify-content: center;
    background: #fff;
    border-radius: 0.5rem;
    color: #3662e3;
    font-size: 1.125rem;
}
.brand-text {
    width: 226px;
    margin-left: 0.75rem;
    padding-bottom: 3px;
}
.brand-name {
    font-size: 1.125rem;
    font-weight: 700;
    line-height: 1.25;
}
.brand-sub {
    font-size: 0.75rem;
    line-height: 1rem;
    color: #deeafc;
    white-space: nowrap;
}
.brand-toggle {
    margin-left: 0.6rem;
    font-size: 0.875rem;
}
.nav {
    flex: 1;
    padding: 39.2px 1rem 0;
}
.nav-item {
    display: flex;
    align-items: center;
    gap: 0.75rem;
    height: 3.25rem;
    padding: 0 1rem;
    margin-bottom: 0.25rem;
    border-radius: 0.5rem;
    font-size: 1rem;
    font-weight: 500;
}
.nav-item .icon {
    font-size: 1.125rem;
    color: #9ea3ae;
}
.nav-item.active {
    background: #f0f5fe;
    color: #3662e3;
    border-right: 6px solid #3662e3;
}
.nav-item.active .icon {
    color: #3662e3;
}
.nav-heading {
    border-top: 1px solid #e5e7eb;
    padding: 1rem 1rem 0.5rem;
    font-size: 0.75rem;
    line-height: 1rem;
    font-weight: 600;
    letter-spacing: 0.05em;
    color: #6c727f;
}
.sidebar-user {
    display: flex;
    align-items: center;
    gap: 0.75rem;
    padding: 1rem;
    border-top: 1px solid #e5e7eb;
}
.avatar {
    width: 2rem;
    height: 2rem;
    display: flex;
    align-items: center;
    justify-content: center;
    border-radius: 50%;
    background: linear-gradient(135deg, #4c81ee, #883ae1);
    color: #fff;
    font-size: 0.75rem;
    font-weight: 700;
}
.avatar-lg {
    width: 2.5rem;
    height: 2.5rem;
    font-size: 0.875rem;
}
.user-name {
    font-size: 0.875rem;
    line-height: 1.25rem;
    font-weight: 600;
    color: #1a2450;
}
.user-role {
    font-size: 0.75rem;
    line-height: 1rem;
    color: #6c727f;
}

/* top bar */
.main {
    flex: 1;
    min-width: 0;
    display: flex;
    flex-direction: column;
}
.topbar {
    height: 98.4px;
    flex: none;
    display: flex;
    align-items: center;
    justify-content: space-between;
    padding: 0 1.5rem;
    padding-bottom: 4px;
    background: #fff;
    border-bottom: 1px solid #e5e7eb;
}
.topbar h1 {
    font-size: 1.125rem;
    font-weight: 600;
    color: #1a2450;
}
.topbar-right {
    display: flex;
    align-items: center;
    gap: 0.75rem;
}
.clock {
    display: flex;
    align-items: center;
    gap: 0.25rem;
    height: 47px;
    padding: 0 0.5rem;
    border: 1px solid #deeafc;
    border-radius: 0.5rem;
    background: linear-gradient(to right, #f0f5fe, #effdfe);
    font-family: "DejaVu Sans Mono", "Liberation Mono", monospace;
    font-size: 0.875rem;
    font-weight: 700;
    color: #2d4ed0;
}
.clock .icon {
    color: #4c81ee;
}
.logout {
    padding-top: 2px;
    font-size: 0.75rem;
    font-weight: 500;
    color: #67748a;
}
.topbar-user {
    padding-left: 0.5rem;
    border-left: 1px solid #e5e7eb;
}

/* content */
.content {
    flex: 1;
    min-height: 0;
    overflow: hidden;
    padding: 1.5rem;
    background: linear-gradient(135deg, #f8fafc, #f0f5fe 50%, #eff2fe);
}
.card {
    background: #fff;
    border: 1px solid #e3e8ef;
    border-radius: 1rem;
    overflow: hidden;
    box-shadow: 0 2px 5px rgba(15, 23, 42, 0.07);
}
.eyebrow {
    font-size: 0.75rem;
    line-height: 1rem;
    font-weight: 600;
    letter-spacing: 0.1em;
    color: #afc8f3;
}
.hero {
    padding: 1.25rem 2rem;
    border-radius: 1rem;
    color: #fff;
    background: radial-gradient(circle at 71% 108%, rgba(84, 60, 180, 0.12), rgba(84, 60, 180, 0) 10rem), linear-gradient(170deg, #263fa9, #253985 50%, #312e7c);
    box-shadow: 0 20px 32px -6px rgba(15, 23, 42, 0.14), 0 8px 12px -6px rgba(15, 23, 42, 0.12);
}
.hero-top {
    display: flex;
    align-items: center;
}
.hero-icon {
    width: 3rem;
    height: 3rem;
    margin-right: 1rem;
    display: flex;
    align-items: center;
    justify-content: center;
    border-radius: 0.75rem;
    background: rgba(255, 255, 255, 0.1);
    box-shadow: 0 0 0 1.6px rgba(255, 255, 255, 0.15);
    color: #c5dafc;
    font-size: 1.25rem;
}
.hero-info {
    flex: 1;
}
.hero h2 {
    font-size: 1.5rem;
    line-height: 2rem;
    font-weight: 700;
    letter-spacing: -0.025em;
}
.hero-meta {
    display: flex;
    align-items: center;
    margin-top: 0.5rem;
    font-size: 0.875rem;
    line-height: 1.25rem;
    color: #cfd8ea;
}
.hero-badge {
    padding: 0.125rem 0.6rem;
    border-radius: 1rem;
    background: rgba(255, 255, 255, 0.15);
    box-shadow: 0 0 0 1.6px rgba(255, 255, 255, 0.12);
    color: #fff;
    font-size: 0.75rem;
    line-height: 1rem;
    font-weight: 600;
}
.hero-dot {
    margin: 0 0.5rem;
}
.hero-actions {
    display: flex;
    gap: 0.5rem;
}
.glass-btn {
    display: flex;
    align-items: center;
    gap: 0.45rem;
    padding: 0.5rem 1rem;
    border-radius: 0.75rem;
    background: rgba(255, 255, 255, 0.1);
    box-shadow: 0 0 0 1.6px rgba(255, 255, 255, 0.15);
    font-size: 0.875rem;
    line-height: 1.25rem;
    font-weight: 600;
}
.hero-progress-text {
    display: flex;
    justify-content: space-between;
    margin: 1.25rem 0 0.35rem;
    font-size: 0.75rem;
    line-height: 1rem;
    color: #d3dff6;
}
.track {
    height: 0.375rem;
    border-radius: 1rem;
    background: rgba(255, 255, 255, 0.2);
}
.track-fill {
    height: 100%;
    border-radius: 1rem;
    background: linear-gradient(to right, #9fc4f9, #a8b4f7);
}

/* steps */
.steps-card {
    margin: 39.6px 0 1.5rem;
    background: rgba(255, 255, 255, 0.98);
}
.steps-head {
    display: flex;
    justify-content: space-between;
    padding: 20px 1rem 0.75rem;
    border-bottom: 1px solid #f2f5f9;
    background: linear-gradient(to bottom, #f6f8fa, #fafbfd 45%);
    font-size: 0.75rem;
    line-height: 1rem;
    color: #97a3b6;
}
.steps-head h3 {
    font-size: 0.75rem;
    font-weight: 600;
    letter-spacing: 0.025em;
    color: #67748a;
}
.steps {
    display: flex;
    padding: 1rem;
    height: 174px;
}
.step {
    width: 5.25rem;
    display: flex;
    flex-direction: column;
    align-items: center;
    color: #67748a;
}
.step-circle {
    width: 2.5rem;
    height: 2.5rem;
    display: flex;
    align-items: center;
    justify-content: center;
    border-radius: 50%;
    background: #f2f5f9;
    box-shadow: 0 0 0 1.6px #e3e8ef;
    font-size: 0.75rem;
}
.step b {
    margin-top: 0.5rem;
    font-size: 0.6875rem;
    line-height: 1.25;
    font-weight: 600;
}
.step small {
    margin-top: 0.1rem;
    font-size: 0.625rem;
    line-height: 1.5;
    color: #97a3b6;
}
.step.current .step-circle {
    background: linear-gradient(135deg, #3662e3, #4d47dc);
    color: #fff;
    box-shadow: 0 0 0 3.2px #fff, 0 0 0 6.4px #c5dafc, 0 6px 12px rgba(54, 98, 227, 0.25);
}
.step.current b {
    color: #2d4ed0;
}
.step-line {
    width: 1.5rem;
    height: 3px;
    margin-top: 31px;
    border-radius: 2px;
    background: #e3e8ef;
}

/* review form */
.columns {
    display: grid;
    grid-template-columns: repeat(12, minmax(0, 1fr));
    gap: 1.5rem;
    align-items: start;
}
.review {
    grid-column: span 8;
}
.side {
    grid-column: span 4;
    display: flex;
    flex-direction: column;
    gap: 26.4px;
}
.review-head {
    display: flex;
    gap: 0.75rem;
    padding: 1rem 1.25rem;
    border-bottom: 1px solid #f2f5f9;
    background: linear-gradient(to right, #f8fafc, #fafbff);
}
.review-icon {
    width: 2.5rem;
    height: 2.5rem;
    display: flex;
    align-items: center;
    justify-content: center;
    border-radius: 0.75rem;
    background: #3662e3;
    color: #fff;
    font-size: 1rem;
    box-shadow: 0 2px 3px rgba(0, 0, 0, 0.08);
}
.review-head h3 {
    font-size: 1rem;
    line-height: 1.5rem;
    font-weight: 600;
    color: #1a2450;
}
.review-head p {
    margin-top: 0.125rem;
    font-size: 0.875rem;
    line-height: 1.25rem;
    color: #67748a;
}
.review-head strong {
    font-weight: 500;
    color: #364153;
}
.review-body {
    padding: 1.25rem;
}
.label {
    display: block;
    margin-bottom: 0.375rem;
    font-size: 0.75rem;
    line-height: 1rem;
    font-weight: 600;
    letter-spacing: 0.025em;
    color: #67748a;
}
.field {
    position: relative;
    margin-bottom: 1.25rem;
}
.input {
    display: block;
    width: 100%;
    height: 98px;
    padding: 0.625rem 1rem;
    border: 1px solid #e3e8ef;
    border-radius: 0.75rem;
    background: #fff;
    font-family: inherit;
    font-size: 0.875rem;
    line-height: 1.25rem;
    color: #364153;
    resize: none;
    appearance: none;
}
.input::placeholder {
    color: #9ea3ae;
}
select.input {
    height: 66px;
}
.input.notes {
    height: 162px;
}
.select-arrow {
    position: absolute;
    right: 0.5rem;
    top: 14px;
    width: 38px;
    height: 38px;
    fill: none;
    stroke: #8a909b;
    stroke-width: 1.1;
    stroke-linecap: round;
    stroke-linejoin: round;
}
.grip {
    position: absolute;
    right: 2px;
    bottom: 2px;
    width: 16px;
    height: 16px;
    fill: none;
    stroke: #555;
    stroke-width: 1.4;
}
.step-notes {
    margin-top: 42px;
    padding: 1rem 1rem 1.4rem;
    border: 1px dashed #e3e8ef;
    border-radius: 0.75rem;
    background: #fcfefd;
}
.step-notes .field {
    margin-bottom: 0;
}
.review-foot {
    display: flex;
    align-items: center;
    justify-content: space-between;
    padding: 1rem 1.25rem;
    border-top: 1px solid #f2f5f9;
    background: #fafbfd;
}
.foot-note {
    display: flex;
    align-items: center;
    gap: 12px;
    font-size: 0.75rem;
    color: #67748a;
}
.foot-note .icon {
    color: #97a3b6;
}
.foot-actions {
    display: flex;
    align-items: center;
    gap: 0.5rem;
}
.btn {
    display: flex;
    align-items: center;
    gap: 0.5rem;
    height: 66px;
    padding: 0 1rem;
    border: 1px solid #e3e8ef;
    border-radius: 0.75rem;
    background: #fff;
    font-family: inherit;
    font-size: 0.875rem;
    font-weight: 600;
    color: #364153;
}
.btn-primary {
    height: 64px;
    padding: 0 1.25rem;
    border: none;
    background: linear-gradient(to right, #3662e3, #4d47dc);
    color: #fff;
    box-shadow: 0 6px 9px -2px rgba(0, 0, 0, 0.14), 0 3px 6px -3px rgba(0, 0, 0, 0.12);
}

/* case file */
.file-head {
    padding: 1rem;
    color: #fff;
    background: linear-gradient(163deg, #263fa9, #253985 50%, #312e7c);
}
.file-head-row {
    display: flex;
    align-items: center;
    justify-content: space-between;
    height: 32px;
}
.ic-badge {
    padding: 0 0.5rem;
    border-radius: 1rem;
    background: rgba(255, 255, 255, 0.15);
    box-shadow: 0 0 0 1.6px rgba(255, 255, 255, 0.1);
    font-size: 0.625rem;
    line-height: 32px;
    font-weight: 700;
}
.file-id {
    margin-top: 0.1875rem;
    font-family: "DejaVu Sans Mono", "Liberation Mono", monospace;
    font-size: 0.875rem;
    line-height: 1.25rem;
    font-weight: 700;
    letter-spacing: -0.025em;
}
.file-body {
    display: flex;
    flex-direction: column;
    gap: 26.2px;
    padding: 1rem;
}
.parties {
    display: grid;
    grid-template-columns: 1fr 1fr;
    gap: 0.75rem;
}
.party {
    padding: 0.75rem;
    border: 1px solid #deeafc;
    border-radius: 0.75rem;
    background: linear-gradient(135deg, #f0f5fe, #fff);
}
.respondent {
    border-color: #fbe5e6;
    background: linear-gradient(135deg, #fdf1f2, #fff);
}
.party-top {
    display: flex;
    align-items: center;
    gap: 0.625rem;
}
.party-avatar {
    width: 2.25rem;
    height: 2.25rem;
    display: flex;
    align-items: center;
    justify-content: center;
    border-radius: 0.5rem;
    background: #3662e3;
    color: #fff;
    font-size: 0.75rem;
    font-weight: 700;
    box-shadow: 0 2px 3px rgba(0, 0, 0, 0.08);
}
.respondent .party-avatar {
    background: #cf364c;
}
.mini-label {
    display: flex;
    align-items: center;
    gap: 11px;
    font-size: 0.625rem;
    line-height: 1.5;
    font-weight: 600;
    letter-spacing: 0.025em;
    color: #97a3b6;
}
.complainant .mini-label {
    color: #5d80e8;
}
.respondent .mini-label {
    color: #d95e70;
}
.strong-line {
    font-size: 0.875rem;
    line-height: 1.25rem;
    font-weight: 600;
    color: #1a2450;
}
.party-meta {
    display: flex;
    align-items: center;
    gap: 0.25rem;
    margin-top: 0.5rem;
    font-size: 0.6875rem;
    line-height: 1rem;
    color: #67748a;
}
.party-meta .icon {
    color: #97a3b6;
}
.incident {
    display: flex;
    gap: 0.75rem;
    padding: 0.75rem;
    border: 1px solid #f2f5f9;
    border-radius: 0.75rem;
    background: #fafbfd;
}
.incident-icon {
    width: 2.25rem;
    height: 2.25rem;
    flex: none;
    display: flex;
    align-items: center;
    justify-content: center;
    border-radius: 0.5rem;
    background: #fff;
    box-shadow: 0 0 0 1.6px #e3e8ef, 0 3px 4px rgba(0, 0, 0, 0.06);
    color: #cb7b2f;
    font-size: 0.875rem;
}
.incident-place {
    margin-top: 0.125rem;
    font-size: 0.75rem;
    line-height: 1rem;
    color: #67748a;
}
.allegation {
    padding: 0.75rem;
    border: 1px solid #f2f5f9;
    border-radius: 0.75rem;
    background: #fcfefd;
}
.allegation blockquote {
    margin-top: 0.5rem;
    padding-left: 0.75rem;
    border-left: 3px solid #a8b4f7;
    font-size: 0.875rem;
    line-height: 1.625;
    color: #4a5568;
}
.status-chip {
    align-self: flex-start;
    display: flex;
    align-items: center;
    gap: 0.25rem;
    padding: 0.25rem 0.5rem;
    border-radius: 0.5rem;
    background: #f2f5f9;
    font-size: 0.6875rem;
    line-height: 1rem;
    font-weight: 500;
    color: #364153;
}
.status-chip .icon {
    font-size: 0.375rem;
    color: #4c81ee;
}

/* activity */
.activity-head {
    display: flex;
    align-items: center;
    justify-content: space-between;
    padding: 0.75rem 1rem;
    border-bottom: 1px solid #f2f5f9;
    background: #fafbfd;
}
.activity-head h3 {
    font-size: 0.875rem;
    line-height: 1.25rem;
    font-weight: 600;
    color: #1a2450;
}
.count {
    padding: 0 0.5rem;
    border-radius: 1rem;
    background: #e3e8ef;
    font-size: 0.625rem;
    line-height: 30px;
    font-weight: 700;
    color: #4a5568;
}
.activity-item {
    display: flex;
    gap: 0.75rem;
    height: 200px;
    padding: 0.75rem 0.5rem 0 1.25rem;
}
.activity-rail {
    display: flex;
    flex-direction: column;
}
.activity-icon {
    width: 1.75rem;
    height: 1.75rem;
    display: flex;
    align-items: center;
    justify-content: center;
    border-radius: 50%;
    background: #deeafc;
    color: #3662e3;
    font-size: 0.6875rem;
}
.rail-line {
    flex: 1;
    width: 1px;
    margin: 13px 0 0 16px;
    background: #e3e8ef;
}
.activity-text {
    flex: 1;
    padding-top: 0.16rem;
}
.activity-title {
    font-size: 0.875rem;
    line-height: 1.25rem;
    font-weight: 600;
    letter-spacing: -0.005em;
    color: #364153;
}
.activity-chip {
    display: inline-block;
    margin-top: 0.2rem;
    padding: 0.125rem 0.375rem;
    border-radius: 0.375rem;
    background: #f2f5f9;
    font-size: 0.625rem;
    line-height: 1.5;
    font-weight: 500;
    color: #4a5568;
}
.activity-time {
    padding-top: 10px;
    font-size: 0.625rem;
    line-height: 1.5;
    font-weight: 500;
    color: #97a3b6;
}
```
